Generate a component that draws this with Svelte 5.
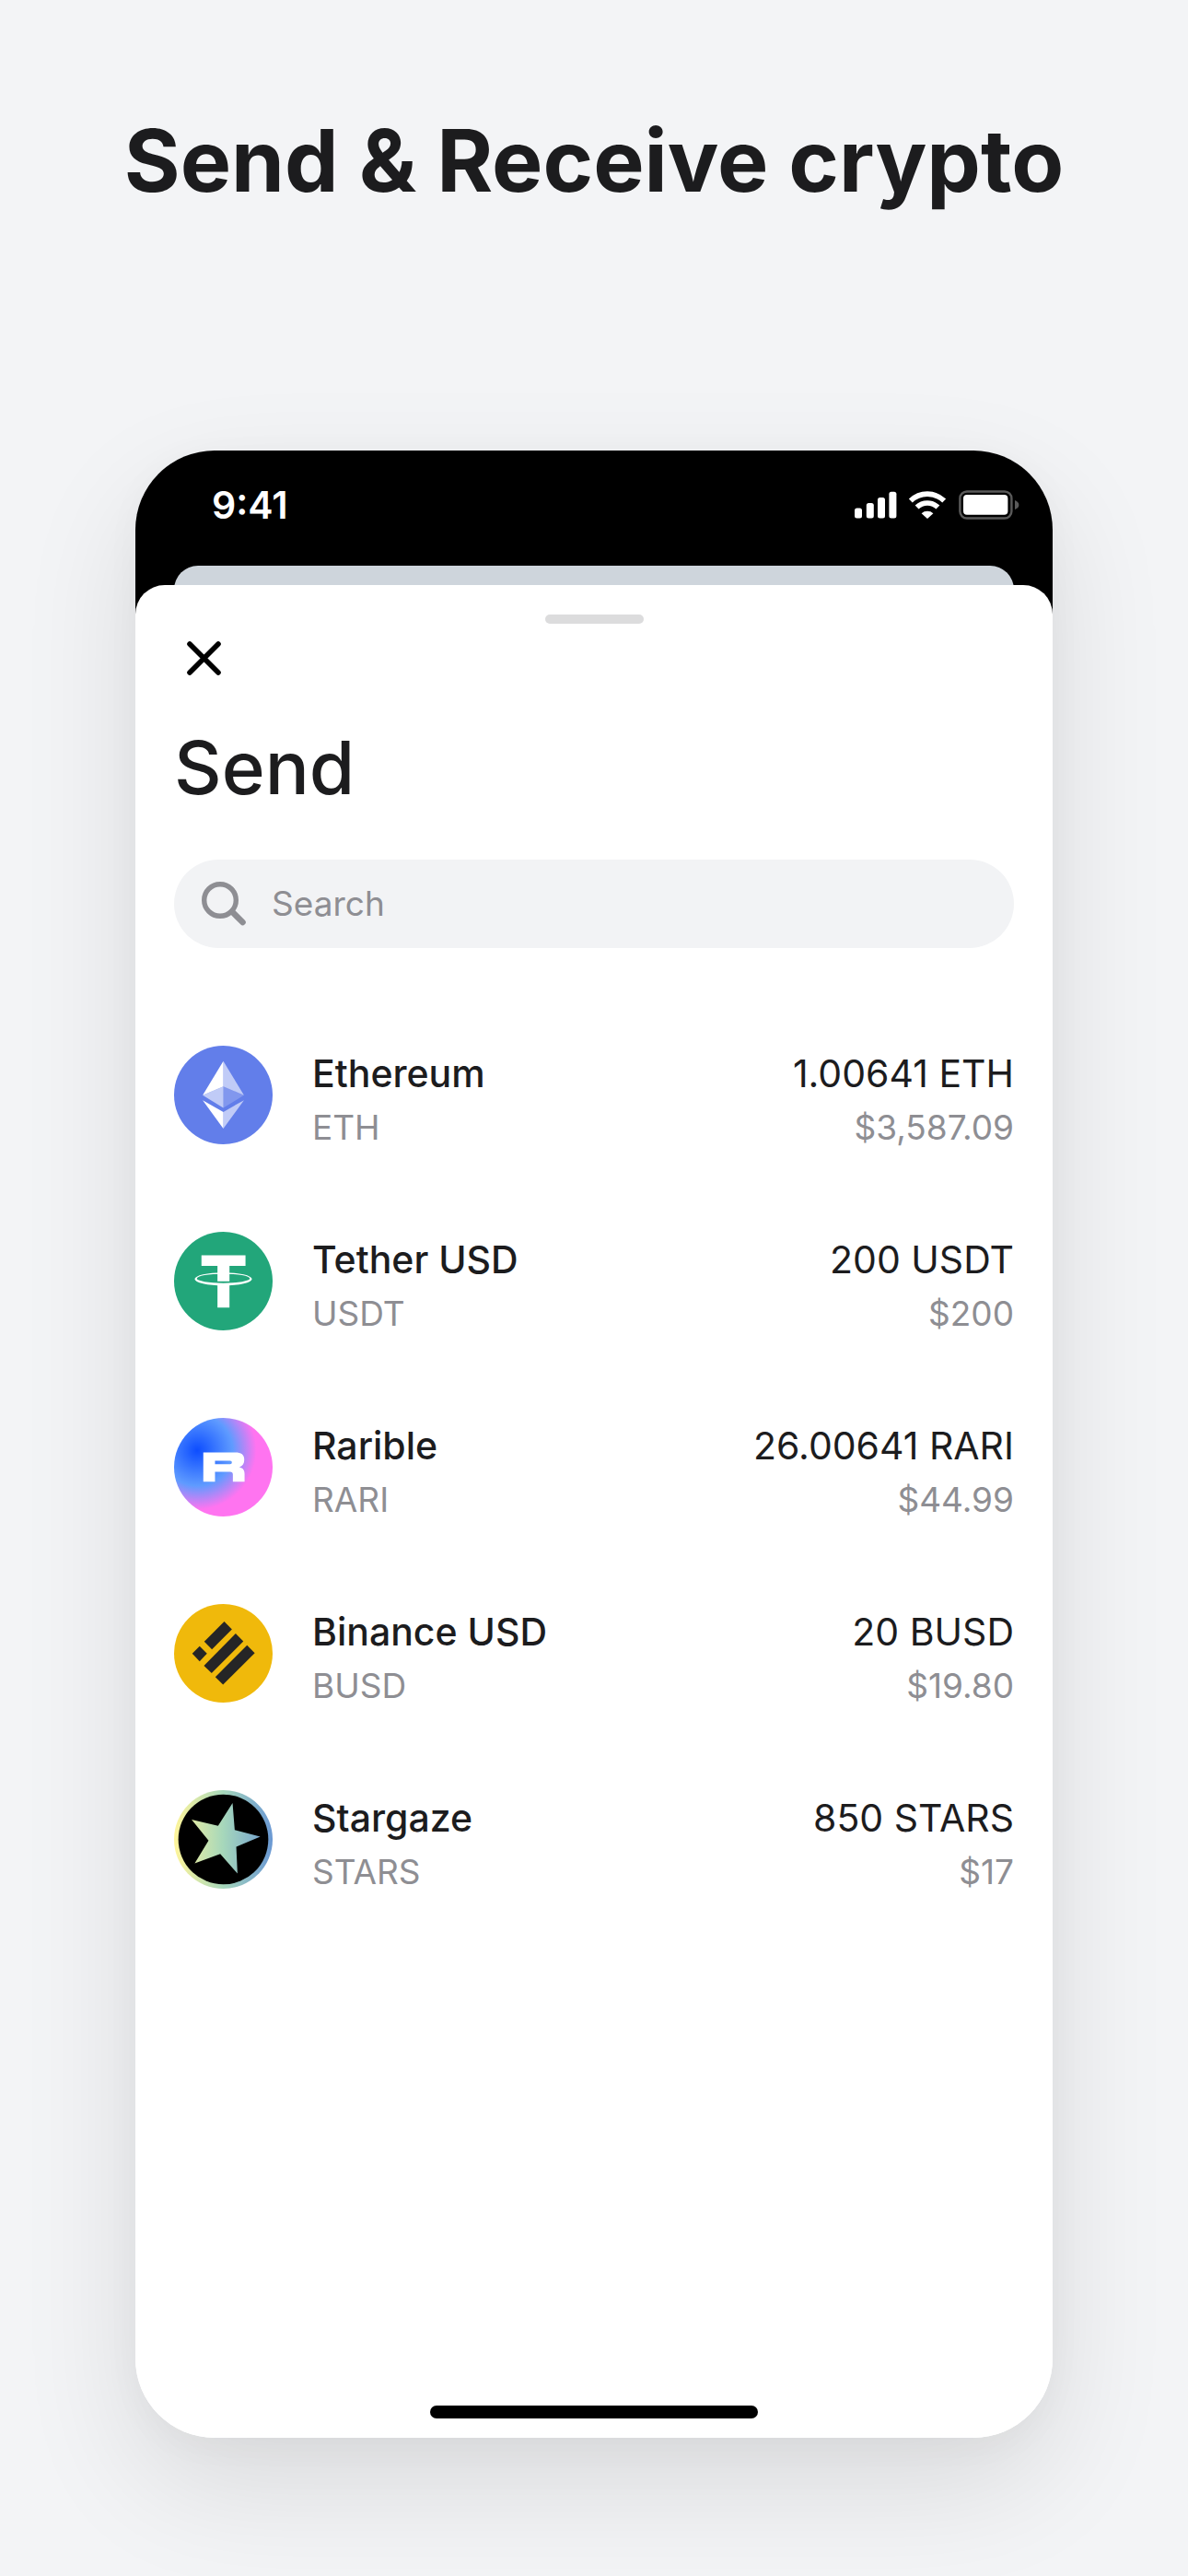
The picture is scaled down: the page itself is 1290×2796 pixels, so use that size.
<script>
  // Wallet send screen: pick an asset to send, shown as a sheet inside a phone frame
  const assets = [
    { id: 'eth', name: 'Ethereum', symbol: 'ETH', amount: '1.00641 ETH', value: '$3,587.09' },
    { id: 'usdt', name: 'Tether USD', symbol: 'USDT', amount: '200 USDT', value: '$200' },
    { id: 'rari', name: 'Rarible', symbol: 'RARI', amount: '26.00641 RARI', value: '$44.99' },
    { id: 'busd', name: 'Binance USD', symbol: 'BUSD', amount: '20 BUSD', value: '$19.80' },
    { id: 'stars', name: 'Stargaze', symbol: 'STARS', amount: '850 STARS', value: '$17' }
  ];

  let query = $state('');

  let visible = $derived(
    assets.filter((a) => `${a.name} ${a.symbol}`.toLowerCase().includes(query.trim().toLowerCase()))
  );
</script>

<main class="page">
  <h1>Send &amp; Receive crypto</h1>

  <div class="phone">
    <div class="backdrop">
      <div class="status-bar">
        <span class="time">9:41</span>
        <svg class="status-icons" viewBox="0 0 180 32" aria-hidden="true">
          <g fill="#fff">
            <rect x="0" y="19.5" width="8" height="11" rx="2.5" />
            <rect x="12.8" y="14" width="8" height="16.5" rx="2.5" />
            <rect x="25" y="8" width="8" height="22.5" rx="2.5" />
            <rect x="37.4" y="1.8" width="8" height="28.7" rx="2.5" />
            <path d="M72.6 25.2a9.5 9.5 0 0 1 12.8 0L79 31z" />
          </g>
          <g fill="none" stroke="#fff" stroke-width="5.6">
            <path d="M60.8 11.6a26 26 0 0 1 36.4 0" />
            <path d="M67.6 18.6a16.5 16.5 0 0 1 22.8 0" />
          </g>
          <rect x="114.4" y="1.5" width="56" height="29" rx="7.5" fill="none" stroke="#5a5a5a" stroke-width="2.4" />
          <rect x="118" y="5" width="48.4" height="21.8" rx="4" fill="#fff" />
          <path d="M174 11c3 1 4.4 3 4.4 5s-1.4 4-4.4 5z" fill="#5a5a5a" />
        </svg>
      </div>
      <div class="card-behind"></div>
    </div>

    <section class="sheet">
      <div class="grabber"></div>

      <button class="close" type="button" aria-label="Close">
        <svg viewBox="0 0 64 64" aria-hidden="true">
          <path d="M17 16l31 31M48 16L17 47" fill="none" stroke="#000" stroke-width="5.6" stroke-linecap="round" />
        </svg>
      </button>

      <h2>Send</h2>

      <label class="search">
        <svg viewBox="0 0 48 48" aria-hidden="true">
          <g fill="none" stroke="#8e8e93">
            <circle cx="20" cy="20" r="17.3" stroke-width="5.4" />
            <path d="M33 32.5l11.5 11.5" stroke-width="6.6" stroke-linecap="round" />
          </g>
        </svg>
        <input type="text" placeholder="Search" aria-label="Search" bind:value={query} />
      </label>

      <ul class="assets">
        {#each visible as asset (asset.id)}
          <li>
            <svg class="coin" viewBox="0 0 320 320" aria-hidden="true">
              {#if asset.id === 'eth'}
                <circle cx="160" cy="160" r="160" fill="#627eea" />
                <g fill="#fff">
                  <path d="M160 50v82l-67 29z" />
                  <path d="M160 50l67 111-67-29z" fill-opacity="0.6" />
                  <path d="M93 161l67-29v70z" fill-opacity="0.6" />
                  <path d="M227 161l-67-29v70z" fill-opacity="0.2" />
                  <path d="M93 177l67 38v54z" />
                  <path d="M227 177l-67 38v54z" fill-opacity="0.6" />
                </g>
              {:else if asset.id === 'usdt'}
                <circle cx="160" cy="160" r="160" fill="#22a67a" />
                <g fill="#fff">
                  <path d="M89 76h143v35h-52v50h-39v-50H89z" />
                  <path d="M141 170h39v76h-39z" />
                  <path
                    fill-rule="evenodd"
                    d="M67 153.5a93 21 0 1 1 186 0a93 21 0 1 1-186 0zM74 151.5a86 15 0 1 0 172 0a86 15 0 1 0-172 0z"
                  />
                </g>
              {:else if asset.id === 'rari'}
                <defs>
                  <radialGradient id="rari-fill" gradientUnits="userSpaceOnUse" cx="75" cy="105" r="192">
                    <stop offset="0" stop-color="#0d4dff" />
                    <stop offset="0.6" stop-color="#5f9bff" />
                    <stop offset="1" stop-color="#ff74f0" />
                  </radialGradient>
                </defs>
                <circle cx="160" cy="160" r="160" fill="url(#rari-fill)" />
                <path
                  fill="#fff"
                  fill-rule="evenodd"
                  d="M95 112h104c19 0 29 7 29 23 0 13-5 21-16 25 12 3 17 9 17 22v25h-38v-23c0-6-3-9-9-9h-49v32H95zM133 139v11h49q6 0 6-5.5t-6-5.5z"
                />
              {:else if asset.id === 'busd'}
                <circle cx="160" cy="160" r="160" fill="#f0b90b" />
                <g fill="#252526">
                  <path d="M83 137l24 24-24 25-24-25z" />
                  <path d="M163 57l25 25-65 65-25-25z" />
                  <path d="M200 96l25 25-103 103-25-24z" />
                  <path d="M237 134l25 25-103 103-25-25z" />
                </g>
              {:else}
                <defs>
                  <linearGradient id="stars-fill" gradientUnits="userSpaceOnUse" x1="0" y1="160" x2="320" y2="160">
                    <stop offset="0" stop-color="#fff59b" />
                    <stop offset="0.5" stop-color="#a6d7bb" />
                    <stop offset="1" stop-color="#6a98d3" />
                  </linearGradient>
                </defs>
                <circle cx="160" cy="160" r="160" fill="url(#stars-fill)" />
                <circle cx="160" cy="160" r="146" />
                <path
                  fill="url(#stars-fill)"
                  d="M190 42l7 87 83 22-78 33 4 87-56-64-83 31 45-74-55-68 86 20z"
                />
              {/if}
            </svg>
            <div class="info">
              <span class="name">{asset.name}</span>
              <span class="sub">{asset.symbol}</span>
            </div>
            <div class="info balance">
              <span class="amount">{asset.amount}</span>
              <span class="sub">{asset.value}</span>
            </div>
          </li>
        {/each}
      </ul>

      <div class="home-indicator"></div>
    </section>
  </div>
</main>

<style>
  :global(body) {
    background: #f3f4f6;
  }

  .page {
    display: flex;
    flex-direction: column;
    box-sizing: border-box;
    min-height: 100vh;
    padding: 118px 147px 150px;
    background: #f3f4f6;
    color: #1c1c1e;
    font-family: Inter, "Liberation Sans", sans-serif;
    overflow: hidden;
  }

  h1 {
    margin: 0 -100px 259px;
    font-size: 93px;
    line-height: 112px;
    font-weight: 700;
    text-align: center;
  }

  .phone {
    display: flex;
    flex: 1;
    flex-direction: column;
    border-radius: 86px;
    background: #fff;
    overflow: hidden;
    box-shadow:
      0 50px 130px rgba(0, 0, 0, 0.11),
      0 8px 40px rgba(0, 0, 0, 0.03);
  }

  /* black area that shows round the corners of the sheet */
  .backdrop {
    background: #000;
  }

  .status-bar {
    display: flex;
    align-items: center;
    justify-content: space-between;
    height: 118px;
    padding: 0 35px 0 83px;
  }

  .time {
    color: #fff;
    font-size: 41px;
    line-height: 48px;
    font-weight: 600;
  }

  .status-icons {
    width: 180px;
    height: 32px;
  }

  .card-behind {
    height: 61px;
    margin: 7px 42px 0;
    border-radius: 26px 26px 0 0;
    background: #ced5dc;
  }

  .sheet {
    display: flex;
    flex: 1;
    flex-direction: column;
    margin-top: -40px;
    padding: 32px 42px 21px;
    border-radius: 32px 32px 0 0;
    background: #fff;
  }

  .grabber {
    align-self: center;
    width: 107px;
    height: 10px;
    border-radius: 5px;
    background: #dcdcdd;
  }

  .close {
    width: 64px;
    height: 64px;
    margin: 6px 0 0;
    padding: 0;
    border: none;
    background: none;
    cursor: pointer;
  }

  .close svg {
    display: block;
  }

  h2 {
    margin: 38px 0 52px;
    font-size: 80px;
    line-height: 96px;
    font-weight: 500;
  }

  .search {
    display: flex;
    align-items: center;
    gap: 28px;
    height: 96px;
    padding: 0 30px;
    border-radius: 48px;
    background: #f2f3f5;
  }

  .search svg {
    flex: none;
    width: 48px;
    height: 48px;
  }

  .search input {
    flex: 1;
    min-width: 0;
    padding: 0;
    border: none;
    outline: none;
    background: none;
    color: #1c1c1e;
    font-family: inherit;
    font-size: 37px;
    line-height: 48px;
  }

  .search input::placeholder {
    color: #8e8e93;
    opacity: 1;
  }

  .assets {
    display: flex;
    flex-direction: column;
    gap: 84px;
    margin: 106px 0 0;
    padding: 0;
    list-style: none;
  }

  li {
    display: flex;
    align-items: flex-start;
  }

  .coin {
    flex: none;
    width: 107px;
    height: 107px;
    margin-right: 43px;
  }

  .info {
    display: flex;
    flex-direction: column;
  }

  .balance {
    margin-left: auto;
    text-align: right;
  }

  .name,
  .amount {
    font-size: 41px;
    line-height: 60px;
  }

  .name {
    font-weight: 500;
  }

  .sub {
    color: #8e8e93;
    font-size: 37px;
    line-height: 58px;
  }

  .home-indicator {
    align-self: center;
    width: 356px;
    height: 14px;
    margin-top: auto;
    border-radius: 7px;
    background: #000;
  }
</style>
